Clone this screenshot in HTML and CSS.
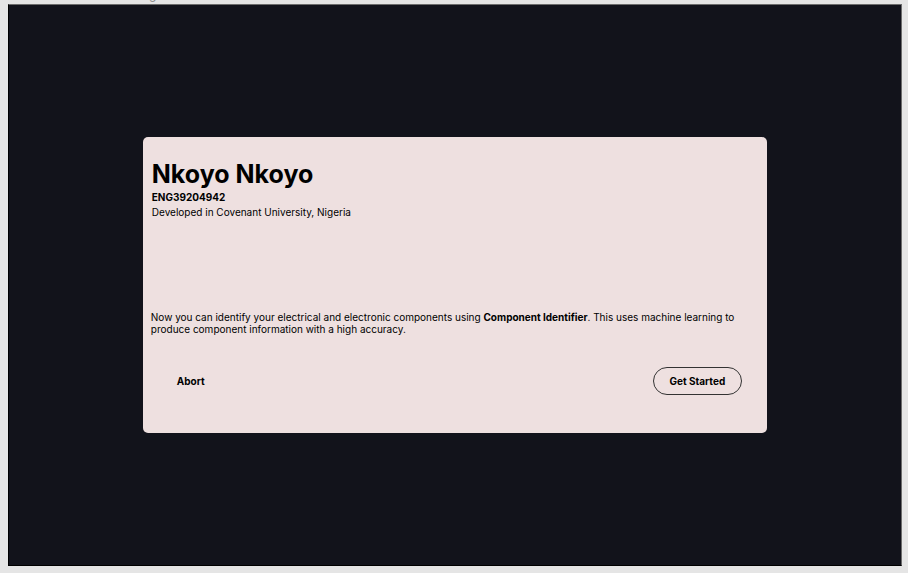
FILE: index.html
```html
<!DOCTYPE html>
<html lang="en">
<head>
<meta charset="utf-8">
<meta name="viewport" content="width=device-width, initial-scale=1">
<title>Component Identifier</title>
<link rel="stylesheet" href="styles.css">
</head>
<body>
<span class="frame-label">g</span>
<main class="screen">
  <section class="card">
    <header class="profile">
      <h1 class="name">Nkoyo Nkoyo</h1>
      <p class="code">ENG39204942</p>
      <p class="origin">Developed in Covenant University, Nigeria</p>
    </header>
    <p class="intro">Now you can identify your electrical and electronic components using <strong>Component Identifier</strong>. This uses machine learning to produce component information with a high accuracy.</p>
    <div class="actions">
      <button type="button" class="button">Abort</button>
      <button type="button" class="button button-outline">Get Started</button>
    </div>
  </section>
</main>
</body>
</html>
```
FILE: styles.css
```css
* {
  box-sizing: border-box;
}

body {
  margin: 0;
  min-height: 100vh;
  padding: 4px 6px 7px 8px;
  display: flex;
  background: #e5e5e5;
  color: #000;
  font-family: Inter, "Liberation Sans", sans-serif;
  font-size: 10px;
  line-height: 12px;
}

h1,
p {
  margin: 0;
}

/* Label above the frame, mostly scrolled out of view */
.frame-label {
  position: absolute;
  top: -11px;
  left: 149px;
  font-size: 12px;
  line-height: 12px;
  color: #8c8c8c;
}

.screen {
  flex: 1;
  display: flex;
  align-items: center;
  justify-content: center;
  border: 1px solid #000;
  border-top-color: #6c6c6c;
  border-right-color: #6c6c6c;
  background: #12131b;
}

.card {
  width: 70%;
  padding: 22px 25px 38px 8px;
  border-radius: 5px;
  background: #eee0e0;
}

.profile {
  padding-left: 1px;
}

.name {
  font-size: 25px;
  line-height: 31px;
  font-weight: 700;
}

.code {
  line-height: 14px;
  font-weight: 700;
}

.origin {
  line-height: 16px;
}

.intro {
  margin-top: 91px;
}

.actions {
  display: flex;
  justify-content: space-between;
  margin-top: 32px;
}

.button {
  padding: 7px 16px;
  border: 1px solid transparent;
  border-radius: 14px;
  background: transparent;
  color: inherit;
  font: inherit;
  font-weight: 700;
}

.button:first-child {
  margin-left: 9px;
}

.button-outline {
  border-color: #333;
}
```
